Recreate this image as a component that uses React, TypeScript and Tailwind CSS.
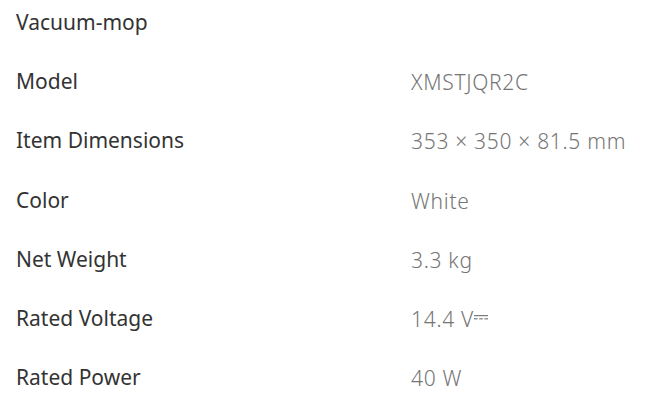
const specs: { label: string; value?: string; dc?: boolean }[] = [
  { label: 'Vacuum-mop' },
  { label: 'Model', value: 'XMSTJQR2C' },
  { label: 'Item Dimensions', value: '353 × 350 × 81.5 mm' },
  { label: 'Color', value: 'White' },
  { label: 'Net Weight', value: '3.3 kg' },
  { label: 'Rated Voltage', value: '14.4 V', dc: true },
  { label: 'Rated Power', value: '40 W' },
];

const DcSymbol = () => (
  <svg width="14" height="8" viewBox="0 0 14 8" className="inline-block mb-[7px]">
    <rect x="0" y="1" width="14" height="1.2" fill="#7a7a7a" />
    <rect x="0" y="4.2" width="3.6" height="1.2" fill="#7a7a7a" />
    <rect x="5.2" y="4.2" width="3.6" height="1.2" fill="#7a7a7a" />
    <rect x="10.4" y="4.2" width="3.6" height="1.2" fill="#7a7a7a" />
  </svg>
);

export default function App() {
  return (
    <div className="w-[666px] h-[407px] bg-white overflow-hidden font-['Noto_Sans',sans-serif] text-[21px]">
      <div className="flex flex-col gap-[31.2px] pt-[8px] pl-4">
        {specs.map((s) => (
          <div key={s.label} className="flex h-[28px] leading-[28px]">
            <div className="w-[395px] text-[#333333]">{s.label}</div>
            {s.value && (
              <div className="text-[#757575] font-light tracking-[0.7px] mt-[1px] whitespace-nowrap">
                {s.value}
                {s.dc && <DcSymbol />}
              </div>
            )}
          </div>
        ))}
      </div>
    </div>
  );
}
